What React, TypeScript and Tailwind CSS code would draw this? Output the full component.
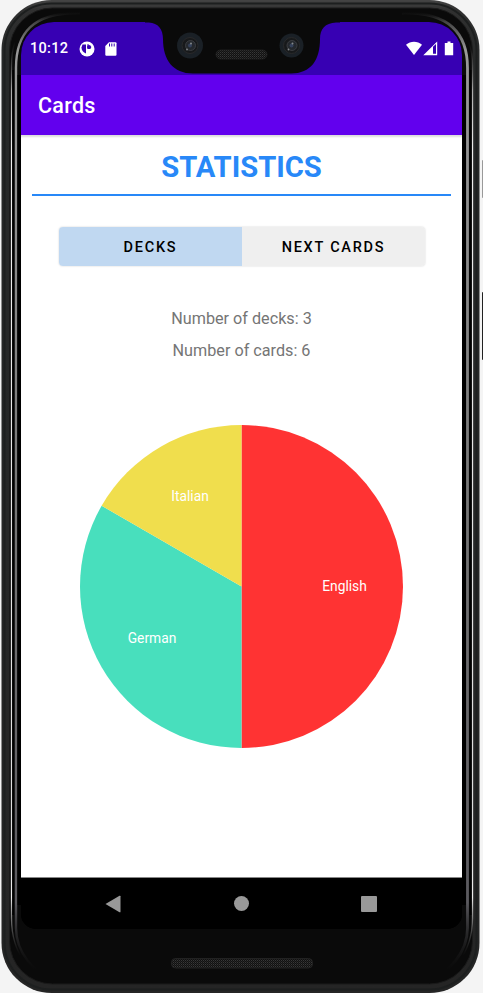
import React from "react";

function PhoneShell() {
  return (
    <svg className="pointer-events-none absolute inset-0" width="483" height="993" viewBox="0 0 483 993" fill="none">
      <defs>
        <linearGradient id="rail" x1="0" y1="0" x2="0" y2="993" gradientUnits="userSpaceOnUse">
          <stop offset="0" stopColor="#444" />
          <stop offset="0.01" stopColor="#303030" />
          <stop offset="0.06" stopColor="#272929" />
          <stop offset="1" stopColor="#252525" />
        </linearGradient>
        <linearGradient id="inner" x1="0" y1="12" x2="0" y2="980" gradientUnits="userSpaceOnUse">
          <stop offset="0" stopColor="#222" stopOpacity="0" />
          <stop offset="0.01" stopColor="#444" />
          <stop offset="0.04" stopColor="#999" />
          <stop offset="0.12" stopColor="#969696" />
          <stop offset="0.5" stopColor="#777" />
          <stop offset="0.92" stopColor="#5b5a5f" />
          <stop offset="0.99" stopColor="#222" stopOpacity="0" />
        </linearGradient>
        <linearGradient id="outer" x1="0" y1="12" x2="0" y2="985" gradientUnits="userSpaceOnUse">
          <stop offset="0.03" stopColor="#555" stopOpacity="0" />
          <stop offset="0.08" stopColor="#aaa" />
          <stop offset="0.14" stopColor="#eee" />
          <stop offset="0.85" stopColor="#ddd" />
          <stop offset="0.91" stopColor="#eee" />
          <stop offset="0.97" stopColor="#555" stopOpacity="0" />
        </linearGradient>
      </defs>
      <rect x="482" y="292" width="2" height="68" rx="1" fill="#222" />
      <rect x="482" y="160" width="2" height="38" rx="1" fill="#999" />
      <rect x="1.500" y="0" width="478" height="993" rx="50" fill="url(#rail)" />
      <rect x="4.500" y="3.500" width="472" height="986" rx="47" stroke="#1d1f1f" strokeWidth="2" />
      <rect x="9.500" y="8" width="463" height="976" rx="43" fill="#0a0a0a" stroke="#1a1a1a" strokeWidth="1" />
      <path d="M60 11C28 11 11.500 32 11.500 66V918C11.500 952 30 981 62 981" stroke="url(#outer)" strokeWidth="1.3" />
      <path d="M422 11C454 11 472.500 32 472.500 66V918C472.500 952 452 981 420 981" stroke="url(#outer)" strokeWidth="1.3" />
      <path d="M13.300 70V915M470.500 70V915" stroke="#000" strokeWidth="2" />
      <path d="M80 13C32 12 16 34 16 68V928C16 952 34 974 55 979" stroke="url(#inner)" strokeWidth="2.4" />
      <path d="M402 13C450 12 467.500 34 467.500 68V928C467.500 952 449 974 428 979" stroke="url(#inner)" strokeWidth="2.8" />
      <path d="M19.500 75V905M464 75V905" stroke="#000" strokeWidth="4" />
    </svg>
  );
}

function Lens({ cx, cy, r }: { cx: number; cy: number; r: number }) {
  return (
    <g>
      <circle cx={cx} cy={cy} r={r} fill="#1a2026" />
      <circle cx={cx} cy={cy} r="8" fill="#17191b" stroke="#29292a" />
      <circle cx={cx + 0.5} cy={cy} r="5" fill="#24282d" stroke="#424448" strokeWidth="0.8" />
      <circle cx={cx} cy={cy} r="2" fill="#35415a" />
      <circle cx={cx + 1} cy={cy - 2} r="1" fill="#85898c" />
      <circle cx={cx - 3} cy={cy + 4} r="0.9" fill="#85898c" />
    </g>
  );
}

function Notch() {
  return (
    <svg className="absolute left-[120px] top-0" width="243" height="76" viewBox="120 0 243 76">
      <defs>
        <pattern id="mesh" width="2" height="2" patternUnits="userSpaceOnUse">
          <rect width="2" height="2" fill="#111" />
          <rect width="1" height="1" fill="#383838" />
          <rect x="1" y="1" width="1" height="1" fill="#242424" />
        </pattern>
      </defs>
      <path d="M145 20V22.500H149C158 23 163 29 163 39C163 60 173 73.500 193 73.500H291C311 73.500 320 60 320 39C320 29 325 23 336 22.500H340V20Z" fill="#0a0a0a" />
      <Lens cx={190} cy={45.500} r={13} />
      <Lens cx={291.500} cy={45.500} r={12} />
      <rect x="216" y="50" width="51" height="9" rx="4.500" fill="url(#mesh)" stroke="#222" strokeWidth="0.8" />
    </svg>
  );
}

function StatusBar() {
  return (
    <div className="flex h-[53px] shrink-0 items-center bg-[#3700b3] pl-[9px] text-white">
      <span className="mt-[2px] w-[49px] text-[14.5px] font-medium leading-none tracking-[0.3px]">10:12</span>
      <svg width="16" height="16" viewBox="0 0 16 16">
        <circle cx="8" cy="8" r="7.500" fill="#fff" />
        <path d="M3.500 3.500H7V12.500C4.300 11.500 2.500 9.500 2.500 6.500Z" fill="#3700b3" />
        <path d="M8.500 3H9.500V5.200Q10 5.700 11 5.500H12.200V6.500Q11.500 8 10 8H8.500Z" fill="#3700b3" />
        <circle cx="10" cy="6" r="2" fill="#3700b3" />
      </svg>
      <svg className="ml-[10px]" width="12" height="14" viewBox="0 0 12 14">
        <path d="M4 .3H10.500Q11.500.3 11.500 1.300V12.500Q11.500 13.700 10.500 13.700H1.300Q.3 13.700.3 12.500V4Z" fill="#fff" />
        <path d="M4.500 1.500V4.500M6.800 1.500V4.500M9.200 1.500V4.500" stroke="#3700b3" strokeWidth="1" />
      </svg>
      <svg className="ml-auto mr-[8px]" width="48" height="15" viewBox="0 0 48 15">
        <path d="M0 3.800C4.500-.3 11.500-.3 16 3.800L8 14Z" fill="#fff" />
        <path fillRule="evenodd" d="M17.300 14.200L31.200.5V14.200ZM27 5.800V12.800H30V3Z" fill="#fff" />
        <path d="M38.800 2H41.500V.5H44.500V2H47.200V14.200H38.800Z" fill="#fff" />
      </svg>
    </div>
  );
}

const decks = [
  { name: "English", color: "#ff3333", d: "M161.500 161.500V0A161.500 161.500 0 0 1 161.500 323Z", x: 264.5, y: 166.4 },
  { name: "German", color: "#48dfbd", d: "M161.500 161.500V323A161.500 161.500 0 0 1 21.640 80.750Z", x: 72, y: 218 },
  { name: "Italian", color: "#f0de4d", d: "M161.500 161.500L21.640 80.750A161.500 161.500 0 0 1 161.500 0Z", x: 110, y: 76.4 },
];

function DeckPie() {
  return (
    <svg className="mx-auto mt-[58px] block" width="323" height="323" viewBox="0 0 323 323">
      {decks.map((s) => (
        <path key={s.name} d={s.d} fill={s.color} />
      ))}
      {decks.map((s) => (
        <text key={s.name} x={s.x} y={s.y} textAnchor="middle" fill="#fff" fontSize="13.8">
          {s.name}
        </text>
      ))}
    </svg>
  );
}

export default function App() {
  return (
    <div className="relative h-[993px] w-[483px] overflow-hidden bg-[#f4f4f4] pt-[22px] font-['Roboto','Noto_Sans',sans-serif]">
      <PhoneShell />
      <div className="relative ml-[21px] flex h-[907px] w-[441px] flex-col overflow-hidden rounded-t-[33px] rounded-b-[15px] bg-black">
        <StatusBar />
        <header className="flex h-[60px] shrink-0 items-center bg-[#6200ee] pl-[17px] pt-[2px] text-[21.5px] font-medium tracking-[0.3px] text-white">
          Cards
        </header>
        <main className="flex-1 bg-white px-[11px] shadow-[inset_0_3px_2px_-1px_#ddd]">
          <h1 className="h-[61px] border-b-2 border-[#2888f8] pt-[10px] text-center text-[29.2px] font-bold leading-[44px] text-[#2888f8]">
            STATISTICS
          </h1>
          <div className="ml-[27px] mt-[31px] flex h-[39px] w-[366px] rounded-[4px] text-[14.5px] font-medium tracking-[1.75px] text-black shadow-[0_0_2px_#ccc]">
            <button className="w-[183px] rounded-l-[4px] bg-[#c0d8f1] pt-[2px]">DECKS</button>
            <button className="w-[183px] rounded-r-[4px] bg-[#efefef] pt-[2px]">NEXT CARDS</button>
          </div>
          <div className="mt-[37px] text-center text-[16.2px] leading-[32px] text-[#757575]">
            <p>Number of decks: 3</p>
            <p>Number of cards: 6</p>
          </div>
          <DeckPie />
        </main>
        <nav className="flex h-[52px] shrink-0 items-center border-t border-[#888] bg-black">
          <svg className="ml-[84px]" width="16" height="18" viewBox="0 0 16 18">
            <path d="M.5 9L14.500.8Q15.500.3 15.500 1.300V16.700Q15.500 17.700 14.500 17.200Z" fill="#999" />
          </svg>
          <span className="ml-[113px] h-[15px] w-[15px] rounded-full bg-[#999]" />
          <span className="ml-[112px] h-4 w-4 rounded-[1px] bg-[#999]" />
        </nav>
      </div>
      <Notch />
      <svg className="relative ml-[171px] mt-[29px] block" width="142" height="11" viewBox="0 0 142 11">
        <defs>
          <pattern id="grille" width="2" height="2" patternUnits="userSpaceOnUse">
            <rect width="2" height="2" fill="#111" />
            <rect width="1" height="1" fill="#383838" />
            <rect x="1" y="1" width="1" height="1" fill="#242424" />
          </pattern>
        </defs>
        <rect x=".5" y=".5" width="141" height="9.500" rx="4" fill="url(#grille)" stroke="#222" />
      </svg>
    </div>
  );
}
